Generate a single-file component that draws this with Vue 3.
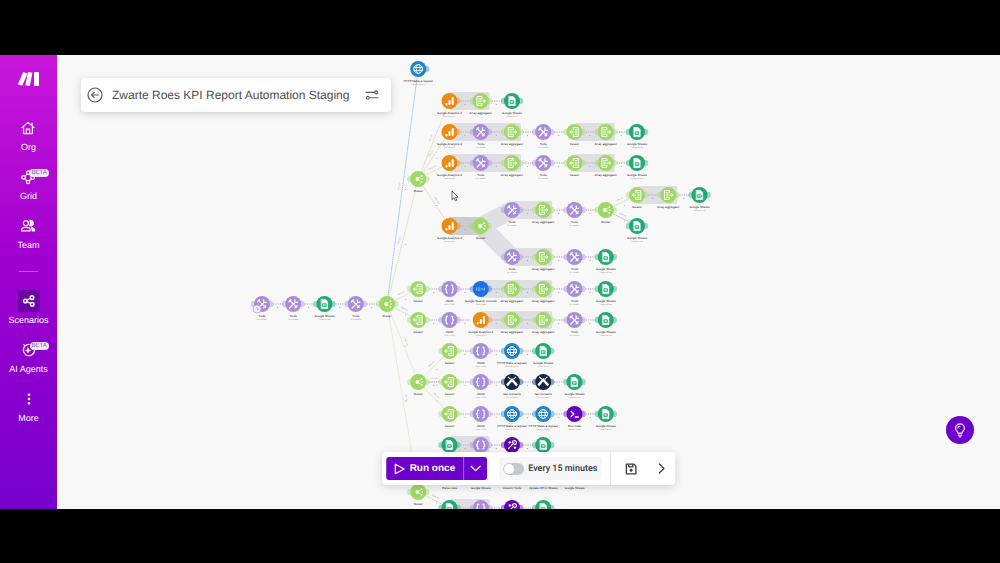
<script setup>
import { ref } from 'vue'

const scheduled = ref(false)

const upperNav = [
  { id: 'org', label: 'Org' },
  { id: 'grid', label: 'Grid', beta: true },
  { id: 'team', label: 'Team' }
]
const lowerNav = [
  { id: 'scenarios', label: 'Scenarios', active: true },
  { id: 'agents', label: 'AI Agents', beta: true },
  { id: 'more', label: 'More' }
]

// Diagram grid: columns are evenly spaced, rows are given by their centre.
const colX = c => 262 + (c * 125) / 4

const kinds = {
  ga: { fill: '#ee8a12', name: 'Google Analytics 4', sub: 'Run a report' },
  tool: { fill: '#ab8bdc', name: 'Tools', sub: 'Set variable' },
  agg: { fill: '#a0d868', name: 'Array aggregator', sub: '' },
  iter: { fill: '#a0d868', name: 'Iterator', sub: '' },
  router: { fill: '#9dd963', name: 'Router', sub: '' },
  sheet: { fill: '#22a871', name: 'Google Sheets', sub: 'Update a row' },
  json: { fill: '#ab8bdc', name: 'JSON', sub: 'Parse JSON' },
  http: { fill: '#1f83cc', name: 'HTTP Make a request', sub: 'Make a request' },
  console: { fill: '#1e6fe0', name: 'Google Search Console', sub: 'Query data' },
  crm: { fill: '#142748', name: 'Get Contacts', sub: 'List contacts' },
  code: { fill: '#6a00c8', name: 'Run code', sub: 'Execute code' },
  wand: { fill: '#6200b4', name: 'Custom Tools', sub: 'Run a tool' }
}

const rows = [
  { y: 304, from: 0, items: 'tool tool sheet tool router' },
  { y: 69, from: 5, items: 'http' },
  { y: 101, from: 6, items: 'ga agg sheet' },
  { y: 132, from: 6, items: 'ga tool agg tool iter agg sheet' },
  { y: 163, from: 6, items: 'ga tool agg tool iter agg sheet' },
  { y: 179, from: 5, items: 'router' },
  { y: 195, from: 12, items: 'iter agg sheet' },
  { y: 210, from: 8, items: 'tool agg tool router' },
  { y: 226, from: 6, items: 'ga router' },
  { y: 226, from: 12, items: 'sheet' },
  { y: 257, from: 8, items: 'tool agg tool sheet' },
  { y: 289, from: 5, items: 'iter json console agg agg tool sheet' },
  { y: 320, from: 5, items: 'iter json ga agg agg tool sheet' },
  { y: 351, from: 6, items: 'iter json http sheet' },
  { y: 382, from: 5, items: 'router iter json crm crm sheet' },
  { y: 414, from: 6, items: 'iter json http http code sheet' },
  { y: 445, from: 6, items: 'sheet json wand sheet', bare: true },
  { y: 492, from: 5, items: 'router' },
  { y: 508, from: 6, items: 'sheet json wand sheet', bare: true }
]

const nodes = []
const links = []
rows.forEach(row => {
  const list = row.items.split(' ')
  list.forEach((kind, i) => {
    const x = colX(row.from + i)
    nodes.push({ x, y: row.y, kind, bare: row.bare, ...kinds[kind] })
    if (i < list.length - 1) links.push({ x, y: row.y })
  })
})

const hiddenRowLabels = ['Parse rows', 'Google Sheets', 'Custom Tools', 'Update KPI in Sheets', 'Google Sheets']

const bands = [
  [6, 7, 101], [6, 8, 132], [10, 11, 132], [6, 8, 163], [10, 11, 163],
  [12, 13, 195], [8, 9, 210], [8, 9, 257], [7, 9, 289], [7, 9, 320],
  [6, 7, 445], [6, 7, 508]
].map(([a, b, y]) => ({ x: colX(a), w: colX(b) - colX(a) + 9, y: y - 9 }))

const branches = [
  [5, 69, 4, 304, '#a9c0dc'],
  [4, 304, 5, 179, '#d3dfc2'],
  [5, 179, 6, 101, '#e0d6ae'],
  [5, 179, 6, 132, '#e0d6ae'],
  [5, 179, 6, 163, '#eed3b4'],
  [5, 179, 6, 226, '#eed3b4'],
  [11, 210, 12, 195, '#b9dfa0'],
  [11, 210, 12, 226, '#9fd0ae'],
  [4, 304, 5, 289, '#d0e2b8'],
  [4, 304, 5, 320, '#d0e2b8'],
  [4, 304, 5, 382, '#dbe6cb'],
  [4, 304, 5, 492, '#dbe6cb'],
  [5, 382, 6, 351, '#d0e2b8'],
  [5, 382, 6, 382, '#d0e2b8'],
  [5, 382, 6, 414, '#d0e2b8'],
  [5, 492, 6, 508, '#b5d9b0']
].map(([a, y1, b, y2, color]) => {
  const x1 = colX(a)
  const x2 = colX(b)
  const angle = (Math.atan2(y2 - y1, x2 - x1) * 180) / Math.PI
  return { x1, y1, x2, y2, color, mx: (x1 + x2) / 2, my: (y1 + y2) / 2, angle: Math.abs(angle) > 90 ? angle + 180 : angle }
})
</script>

<template>
  <div class="stage">
    <div class="app">
      <nav class="sidebar" aria-label="Main">
        <a class="brand" href="#" aria-label="Home">
          <svg width="24" height="16" viewBox="0 0 24 16" fill="#fff">
            <path d="M6.2 1 10.6 2.5 5.2 14.8 0.8 13.2Z" />
            <path d="M11 1 15.4 1.7 12.8 15 8.4 14.2Z" />
            <rect x="17" y="1" width="5" height="14" rx=".6" />
          </svg>
        </a>
        <template v-for="(group, g) in [upperNav, lowerNav]" :key="g">
          <hr v-if="g" class="rule" />
          <ul class="group">
            <li v-for="item in group" :key="item.id">
              <a class="item" href="#" :aria-current="item.active ? 'page' : null">
                <span class="icon" :class="{ active: item.active }">
                  <svg width="16" height="16" viewBox="0 0 16 16" fill="none" stroke="#fff" stroke-width="1.2" stroke-linejoin="round" stroke-linecap="round">
                    <template v-if="item.id === 'org'">
                      <path d="M2 7.6 8 2.4l6 5.2M3.6 7v6.6h8.8V7M12 3v2" />
                      <path d="M6.4 13.4V9.2h3.2v4.2" />
                    </template>
                    <template v-else-if="item.id === 'grid'">
                      <circle cx="8.4" cy="3.6" r="1.8" /><circle cx="3.6" cy="8.4" r="1.8" />
                      <circle cx="12.6" cy="8.6" r="1.8" /><circle cx="8" cy="13" r="1.6" />
                      <path d="M5 7.2 7 5M5 9.8l1.7 1.8M11.2 10l-1.9 1.8" />
                    </template>
                    <template v-else-if="item.id === 'team'">
                      <circle cx="5.9" cy="5.2" r="2.5" />
                      <path d="M1.6 12.8v-1.2c0-1.6 2.4-2.3 4.3-2.3s4.3.7 4.3 2.3v1.2Z" />
                      <path d="M9.8 2.5a2.8 2.8 0 1 1 0 5.4c1-1.6 1-3.8 0-5.4ZM11.6 9.5c1.7.4 3 1.2 3 2.3v1.2h-2.4v-1.2c0-.9-.3-1.6-.6-2.3Z" fill="#fff" />
                    </template>
                    <template v-else-if="item.id === 'scenarios'">
                      <circle cx="4.4" cy="8" r="1.8" stroke-width="1.5" /><circle cx="11" cy="4.6" r="1.8" stroke-width="1.5" /><circle cx="11.2" cy="11.2" r="1.8" stroke-width="1.5" />
                      <path d="m6.2 7 3.2-1.6M6.2 8.8l3.4 1.6" />
                    </template>
                    <template v-else-if="item.id === 'agents'">
                      <path d="M8 2.4a5.6 5.6 0 1 0 5.6 6M4 4 2.8 2.6" />
                      <path d="M7 5.8 7.7 7.7 9.6 8.4 7.7 9.1 7 11 6.3 9.1 4.4 8.4 6.3 7.7Z" fill="#fff" stroke-width=".6" />
                    </template>
                    <template v-else>
                      <g fill="#fff" stroke="none"><circle cx="8" cy="3.8" r="1.3" /><circle cx="8" cy="8" r="1.3" /><circle cx="8" cy="12.2" r="1.3" /></g>
                    </template>
                  </svg>
                  <span v-if="item.beta" class="beta">BETA</span>
                </span>
                <span class="name">{{ item.label }}</span>
              </a>
            </li>
          </ul>
        </template>
      </nav>

      <main class="canvas">
        <svg class="diagram" aria-label="Scenario diagram">
          <g transform="translate(-57 -55)">
            <g fill="#dfdfe3">
              <rect v-for="(b, i) in bands" :key="i" :x="b.x" :y="b.y" :width="b.w" height="18" rx="2" />
              <g fill="none" stroke="#dfdfe3" stroke-width="18" stroke-linejoin="round">
                <path d="M481 226 512 210" />
                <path d="M481 226 512 257" />
              </g>
              <rect x="449" y="217" width="34" height="18" fill="#cbcbd0" />
            </g>

            <g v-for="(b, i) in branches" :key="'b' + i">
              <line :x1="b.x1" :y1="b.y1" :x2="b.x2" :y2="b.y2" :stroke="b.color" stroke-width="1" stroke-dasharray="1.6 .6" />
              <text :transform="`translate(${b.mx} ${b.my}) rotate(${b.angle})`" y="-3" class="tiny faint">Filter set</text>
              <circle :cx="b.mx + 3" :cy="b.my + 3" r=".6" fill="#aaa" />
            </g>

            <g v-for="(l, i) in links" :key="'l' + i">
              <line :x1="l.x + 11" :x2="l.x + 21" :y1="l.y" :y2="l.y" stroke="#c3bbcf" stroke-width="1.4" stroke-dasharray="1.2 1.1" />
              <circle :cx="l.x + 15.5" :cy="l.y + 3.5" r=".6" fill="#999" />
            </g>

            <g v-for="(n, i) in nodes" :key="'n' + i" :transform="`translate(${n.x} ${n.y})`">
              <g :fill="n.fill" opacity=".42">
                <circle cx="8" r="3.2" />
                <circle v-if="n.kind !== 'ga' && n.y !== 69" cx="-8" r="3.2" />
              </g>
              <circle r="8" :fill="n.fill" />
              <g fill="none" stroke="#fff" stroke-width="1" stroke-linecap="round" stroke-linejoin="round">
                <path v-if="n.kind === 'ga'" d="M-3 3.4v-.3M0 3V0M3.2 3v-6" stroke-width="2.1" />
                <template v-else-if="n.kind === 'tool'">
                  <path d="M-3.6-3.6 3.4 3.4" stroke-width="1.3" />
                  <path d="M2.2-1.8-3.6 4M1.6-4.2l.2 2.4 2.4.2M-4.4-2.2-2.2-4.4M1.6 3.8 3.8 1.6" stroke-width="1.2" />
                </template>
                <template v-else-if="n.kind === 'agg'">
                  <path d="M1.2-2.2v-2.2h-5v8.8h5V2.2M-2.2-2.2H0M-2.2 0H0M-2.2 2.2H0" />
                  <path d="M1.4 0h3M3.4-1.4 4.8 0 3.4 1.4" />
                </template>
                <template v-else-if="n.kind === 'iter'">
                  <path d="M-1.2-2.2v-2.2h5v8.8h-5V2.2M2.2-2.2H.6M2.2 0H.6M2.2 2.2H.6" />
                  <path d="M-1.2 0h-3.2M-3.2-1.4-4.8 0-3.2 1.4" />
                </template>
                <template v-else-if="n.kind === 'router'">
                  <g fill="#fff" stroke="none"><circle cx="-.8" r="1.9" /><circle cx="3.4" cy="-2.8" r=".9" /><circle cx="4" r=".8" /><circle cx="3.4" cy="2.8" r=".9" /></g>
                  <path d="M0-.6 3.2-2.6M0 .6 3.2 2.6" stroke-width=".6" />
                </template>
                <template v-else-if="n.kind === 'sheet'">
                  <path d="M-3-4.6h4L3.2-2.4v7H-3Z" fill="#fff" stroke-width=".6" />
                  <path d="M-1.5-.3h3.2v2.8h-3.2ZM-1.5 1.1h3.2" :stroke="n.fill" stroke-width=".8" />
                </template>
                <path v-else-if="n.kind === 'json'" d="M-2-3.8c-1.6 0-1.2 1-1.2 2s-.2 1.5-1 1.8c.8.3 1 .8 1 1.8s-.4 2 1.2 2M2-3.8c1.6 0 1.2 1 1.2 2s.2 1.5 1 1.8c-.8.3-1 .8-1 1.8s.4 2-1.2 2" stroke-width="1.2" />
                <template v-else-if="n.kind === 'http'">
                  <circle r="4.4" /><ellipse rx="2" ry="4.4" stroke-width=".7" />
                  <path d="M-4.2-1.5h8.4M-4.2 1.5h8.4" stroke-width=".9" />
                </template>
                <path v-else-if="n.kind === 'console'" d="M-4.2-1v2M-2.4-1h1.6M-2.4 1h1.6M.8 0h1.4M3.6-1.2v2.4" stroke-width=".8" stroke="#bcd8fb" />
                <g v-else-if="n.kind === 'crm'" stroke-linecap="butt" stroke-linejoin="miter">
                  <path d="M-5 3.4 0-2.2 5 3.4" stroke-width="2.4" />
                  <path d="M-4-5.2-1.4-2.6M4-5.2 1.4-2.6" stroke-width="1.2" />
                </g>
                <path v-else-if="n.kind === 'code'" d="M-3.4-2.6-.6 0l-2.8 2.6M.8 3h3" stroke-width="1.3" />
                <path v-else d="M-3.6 3.6 2 -2M.4-2.4a2 2 0 1 1 2 2M-3-2.6h1.8M-2.1-3.5v1.8M2.2 2.6h1.6M3 1.8v1.6" stroke-width="1.1" />
              </g>
              <template v-if="!n.bare">
                <text class="tiny" y="13">{{ n.name }}</text>
                <text v-if="n.sub" class="tiny faint" y="16">{{ n.sub }}</text>
              </template>
            </g>

            <g>
              <circle cx="257" cy="309" r="4" fill="#f4effb" stroke="#b79fe0" stroke-width=".8" />
              <path d="M257 307v2.2h1.8" fill="none" stroke="#ab8bdc" stroke-width=".8" />
            </g>

            <text v-for="(t, i) in hiddenRowLabels" :key="t + i" class="tiny" :x="colX(6 + i)" y="489">{{ t }}</text>

            <path d="M452 191v8.6l2-1.8 1.4 3 1.4-.6-1.4-3h2.6Z" fill="#fff" stroke="#444" stroke-width=".8" />
          </g>
        </svg>

        <header class="title-card">
          <button type="button" class="plain" aria-label="Back">
            <svg width="16" height="16" viewBox="0 0 16 16" fill="none" stroke="#5c5c60" stroke-width="1.2" stroke-linecap="round" stroke-linejoin="round">
              <circle cx="8" cy="8" r="7" /><path d="M11.4 8H4.8M7.2 5.4 4.6 8l2.6 2.6" />
            </svg>
          </button>
          <h1>Zwarte Roes KPI Report Automation Staging</h1>
          <button type="button" class="plain" aria-label="Scenario settings">
            <svg width="14" height="12" viewBox="0 0 14 12" fill="none" stroke="#5c5c60" stroke-width="1.1" stroke-linecap="round">
              <path d="M1 3.4h8.6M4.6 8.8H13" /><circle cx="11.2" cy="3.4" r="1.5" /><circle cx="2.8" cy="8.8" r="1.5" />
            </svg>
          </button>
        </header>

        <button type="button" class="help" aria-label="Tips">
          <svg width="12" height="15" viewBox="0 0 12 15" fill="none" stroke="#f3e3ff" stroke-width="1.2" stroke-linecap="round" stroke-linejoin="round">
            <path d="M4 10.2C4 8.4 1.6 7.8 1.6 5.2a4.4 4.4 0 0 1 8.8 0c0 2.6-2.4 3.2-2.4 5ZM4.4 12.2h3.2M5.2 13.8h1.6M4 5a2 2 0 0 1 2-2" />
          </svg>
        </button>

        <div class="toolbar">
          <div class="actions">
            <div class="run">
              <button type="button" class="run-main">
                <svg width="11" height="12" viewBox="0 0 11 12" fill="none" stroke="#fff" stroke-width="1.3" stroke-linejoin="round"><path d="M1.2 1.2 10 6l-8.8 4.8Z" /></svg>
                Run once
              </button>
              <button type="button" class="run-more" aria-label="Run options">
                <svg width="11" height="7" viewBox="0 0 11 7" fill="none" stroke="#fff" stroke-width="1.3" stroke-linecap="round" stroke-linejoin="round"><path d="M1 1.2 5.5 5.6 10 1.2" /></svg>
              </button>
            </div>
            <label class="schedule">
              <input v-model="scheduled" type="checkbox" role="switch" />
              <span>Every 15 minutes</span>
            </label>
          </div>
          <div class="tools">
            <button type="button" class="plain" aria-label="Save">
              <svg width="12" height="12" viewBox="0 0 12 12" fill="none" stroke="#3d3d42" stroke-width="1.3" stroke-linejoin="round">
                <path d="M1.2 1.2h7.6l2 2v7.6H1.2Z" /><path d="M3.6 1.4v2.4h4V1.4" /><circle cx="6" cy="7.2" r="1.2" fill="#3d3d42" stroke-width=".6" />
              </svg>
            </button>
            <button type="button" class="plain" aria-label="More tools">
              <svg width="7" height="11" viewBox="0 0 7 11" fill="none" stroke="#3d3d42" stroke-width="1.3" stroke-linecap="round" stroke-linejoin="round"><path d="M1.2 1 5.8 5.5 1.2 10" /></svg>
            </button>
          </div>
        </div>
      </main>
    </div>
  </div>
</template>

<style>
body {
  background: #000;
}
</style>

<style scoped>
.stage {
  box-sizing: border-box;
  height: 100vh;
  padding: 55px 0 54px;
  background: #000;
  font-family: "Liberation Sans", Arial, sans-serif;
  text-rendering: geometricPrecision;
}
.app {
  display: flex;
  height: 100%;
  overflow: hidden;
}
.sidebar {
  flex: none;
  display: flex;
  flex-direction: column;
  align-items: center;
  width: 57px;
  background: linear-gradient(#c916da, #9f00d0 45%, #7600cc);
}
.brand {
  display: flex;
  margin: 16px 0 30px;
}
.group {
  display: flex;
  flex-direction: column;
  gap: 12px;
  margin: 0;
  padding: 0;
  list-style: none;
}
.item {
  display: flex;
  flex-direction: column;
  align-items: center;
  gap: 1px;
  color: #fff;
  text-decoration: none;
}
.icon {
  position: relative;
  display: grid;
  place-items: center;
  width: 22px;
  height: 22px;
  border-radius: 2px;
}
.icon.active {
  background: #6c00a4;
}
.beta {
  position: absolute;
  left: 12px;
  top: 3px;
  padding: 0 2px;
  border-radius: 4px;
  background: #f1e6f8;
  color: #75647f;
  font-size: 6px;
  line-height: 8px;
}
.name {
  font-size: 9px;
  line-height: 14px;
}
.rule {
  width: 19px;
  height: 1px;
  margin: 19px 0 18px;
  border: 0;
  background: #c055e0;
}
.canvas {
  position: relative;
  flex: 1;
  min-width: 0;
  overflow: hidden;
  background: #f8f8f8;
}
.diagram {
  position: absolute;
  inset: 0;
  width: 100%;
  height: 100%;
}
.tiny {
  font-size: 3px;
  text-anchor: middle;
  fill: #222;
}
.faint {
  fill: #999;
  font-size: 2px;
}
button {
  font-family: inherit;
  text-rendering: inherit;
  cursor: pointer;
}
.plain {
  display: flex;
  padding: 0;
  border: 0;
  background: none;
}
.title-card {
  position: absolute;
  top: 23px;
  left: 24px;
  display: flex;
  align-items: center;
  gap: 9px;
  height: 34px;
  padding: 0 12px 0 6px;
  border-radius: 4px;
  background: #fff;
  box-shadow: 0 2px 8px rgba(0, 0, 0, 0.16);
}
h1 {
  margin: 0 7px 0 0;
  color: #4c4c50;
  font-size: 12px;
  font-weight: 400;
  line-height: 16px;
  white-space: nowrap;
}
.help {
  position: absolute;
  right: 26px;
  bottom: 65px;
  display: grid;
  place-items: center;
  width: 28px;
  height: 28px;
  padding: 0;
  border: 0;
  border-radius: 50%;
  background: #6d00cc;
}
.toolbar {
  position: absolute;
  bottom: 24px;
  left: 50%;
  transform: translateX(-50%);
  display: flex;
  height: 33px;
  border-radius: 4px;
  background: #fff;
  box-shadow: 0 2px 10px rgba(0, 0, 0, 0.16);
}
.actions {
  display: flex;
  align-items: center;
  gap: 12px;
  padding: 0 8px 0 4px;
  border-right: 1px solid #e2e2e5;
}
.run {
  display: flex;
  height: 23px;
  overflow: hidden;
  border-radius: 3px;
}
.run button {
  display: flex;
  align-items: center;
  border: 0;
  background: #6d00cc;
  color: #fff;
}
.run-main {
  gap: 5px;
  padding: 0 8px;
  font-size: 10px;
  font-weight: 700;
  white-space: nowrap;
}
.run .run-more {
  padding: 0 6px;
  border-left: 1px solid #a860e6;
}
.schedule {
  display: flex;
  align-items: center;
  gap: 4px;
  height: 23px;
  padding: 0 5px 0 4px;
  border-radius: 3px;
  background: #f6f6f8;
  color: #333338;
  font-family: Roboto, sans-serif;
  font-size: 9px;
  font-weight: 500;
  white-space: nowrap;
}
.schedule input {
  appearance: none;
  display: flex;
  width: 21px;
  height: 12px;
  margin: 0;
  padding: 1px;
  border-radius: 6px;
  background: #c6c9cc;
  box-sizing: border-box;
}
.schedule input::before {
  content: "";
  width: 10px;
  height: 10px;
  border-radius: 50%;
  background: #fff;
}
.schedule input:checked {
  justify-content: flex-end;
  background: #6d00cc;
}
.tools {
  display: flex;
  align-items: center;
  gap: 21px;
  padding: 0 10px 0 14px;
}
</style>
